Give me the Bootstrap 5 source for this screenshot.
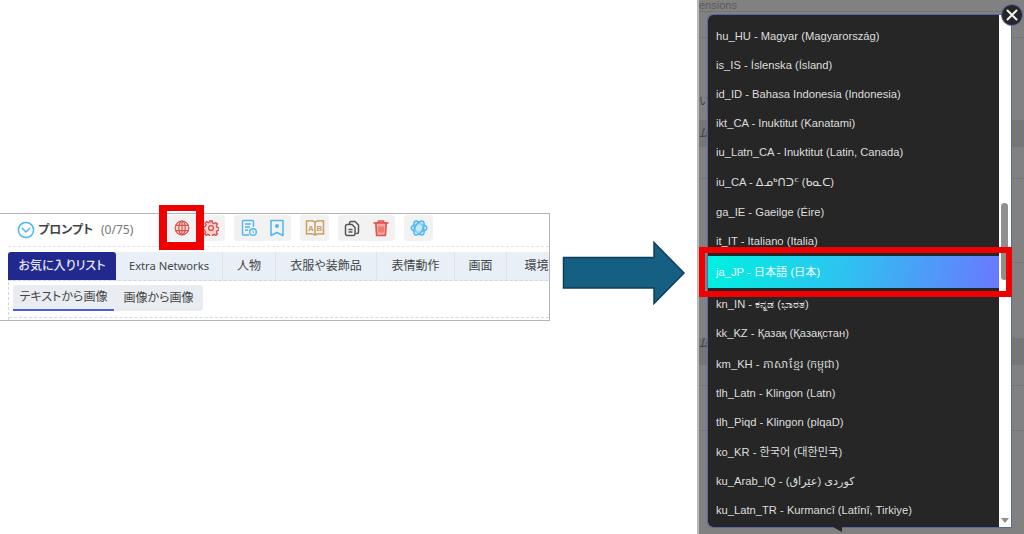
<!DOCTYPE html>
<html lang="ja">
<head>
<meta charset="utf-8">
<title>Language setting</title>
<link href="https://cdn.jsdelivr.net/npm/bootstrap@5.3.0/dist/css/bootstrap.min.css" rel="stylesheet">
<script src="https://cdn.jsdelivr.net/npm/bootstrap@5.3.0/dist/js/bootstrap.bundle.min.js"></script>
<style>
html,body{margin:0;height:534px;overflow:hidden;background:#fff}
body{position:relative;width:1024px;font-family:"Noto Sans","Noto Sans CJK JP",sans-serif}
.ui-panel{position:absolute;left:-1px;top:213px;width:551px;height:108px;border:1px solid #b4b4b4;border-left:0;overflow:hidden;background:#fff}
.ui-head{height:33px;margin-left:9px;padding-left:9px;border-bottom:1px dashed #e2e6ea}
.ui-title{font-size:12px;font-weight:700;color:#444;margin-left:3px;width:63px;white-space:nowrap;font-feature-settings:"palt"}
.ui-count{font-size:12px;color:#777;width:67px;white-space:nowrap}
.ui-tools{gap:9px;padding-top:1px;align-self:flex-start}
.ui-tool{height:26px;background:#f2f2f2;border-radius:4px;width:57px;display:flex;align-items:center;justify-content:space-around}
.ui-tool.one{width:29px}
.ui-lower{margin-left:9px;height:73px;border-left:1px dashed #cfd6dc}
.ui-tabs{margin-top:5px;margin-left:-1px;height:29px;background:#e8eff6;width:600px;flex-wrap:nowrap;border-bottom:1px dashed #cfd6dc}
.ui-tab{font-size:12px;color:#444;display:flex;align-items:center;justify-content:center;border-right:1px solid #dde3e8;flex:none;height:28px;font-feature-settings:"palt"}
.ui-tab.lat{font-size:11.2px}
.ui-tab.on{background:#21298f;color:#e8e8f6;border-radius:3px 3px 0 0;font-weight:500;border-right:0}
.w-a{width:108px}.w-b{width:107px}.w-c{width:53px}.w-d{width:101px}.w-e{width:78px}.w-f{width:52px}.w-g{width:60px}
.ui-subs{margin:4px 0 0 4px;height:26px;width:190px;background:#e9edf2;border-radius:3px}
.ui-sub{font-size:12px;color:#444;display:flex;align-items:center;justify-content:center;height:26px;font-feature-settings:"palt"}
.ui-sub.on{width:101px;border-bottom:2px solid #4a5be0}
.ui-sub.off{width:89px}
.ui-foot{margin-top:6px;border-top:1px dashed #d4dae0}
.ui-arrow{position:absolute;left:562px;top:241px}
.ui-modal{position:absolute;left:697px;top:0;width:327px;height:534px;overflow:hidden;background-color:#818181;border-left:2px solid #b9b9b9;
  background-repeat:no-repeat;
  background-image:linear-gradient(#757575,#757575),linear-gradient(#757575,#757575),linear-gradient(#767676,#767676),linear-gradient(#757575,#757575),linear-gradient(#757575,#757575),linear-gradient(#767676,#767676),linear-gradient(#757575,#757575),linear-gradient(#757575,#757575);
  background-size:100% 1px,100% 1px,100% 27px,100% 1px,100% 1px,100% 27px,100% 1px,100% 1px;
  background-position:0 11px,0 37px,0 120px,0 178px,0 262px,0 338px,0 385px,0 430px}
.ui-ghost{font-family:"Liberation Sans",sans-serif;font-size:11px;color:#5a5a5a;line-height:1;height:11px;white-space:nowrap}
.ui-ghost-mark{position:absolute;left:0;font-size:11px;line-height:1;color:#3f3f3f}
.g1{top:95px}.g2{top:127px}.g3{top:337px}
.ui-box{position:absolute;left:9px;top:15px;width:303px;height:512px;background:#fff;border-radius:5px 0 0 5px;box-shadow:0 0 0 1px #5a66a8}
.ui-langs{width:291px;height:512px;background:#262626;border-radius:5px 0 0 5px;padding-top:7px;font-family:"Liberation Sans","DejaVu Sans","Noto Sans CJK JP","Noto Sans CJK KR",sans-serif;font-size:11.2px;color:#dedede;overflow:hidden}
.ui-lang{height:29px;padding-left:8px;display:flex;align-items:center;background:transparent;border:0;color:inherit;white-space:nowrap;line-height:1;flex:none}
.h-31{height:31px}
.ui-lang.kn{height:31px;padding-top:3px}
.ui-lang.km{height:31px;padding-top:2px}
.ui-lang.ko{height:30px;padding-top:2px}
.ui-lang.on{height:32px;padding-top:2px;background:linear-gradient(100deg,#00f0e0 0%,#2cc5f0 45%,#6a78ff 100%);color:#f0ffff}
.ui-thumb{position:absolute;left:293px;top:188px;width:7px;height:77px;background:#8f8f8f;border-radius:4px}
.ui-down{position:absolute;left:293px;top:503px;width:0;height:0;border-left:4px solid transparent;border-right:4px solid transparent;border-top:5px solid #8f8f8f}
.ui-close{position:absolute;left:302px;top:4px;width:22px;height:22px;border-radius:50%;background:#262626;border:1px solid #5a66a8;padding:0;display:flex;align-items:center;justify-content:center}
.ui-notch{position:absolute;left:134px;top:522px;width:0;height:0;border-top:5px solid transparent;border-bottom:5px solid transparent;border-right:9px solid #262626}
.ui-mark{position:absolute;border-style:solid;border-color:#f00000;background:transparent;pointer-events:none}
.ui-mark-a{left:159px;top:205px;width:45px;height:45px;border-width:6px 8px 8px 8px}
.ui-mark-b{left:699px;top:247px;width:313px;height:50px;border-width:6px}
</style>
</head>
<body>

<div class="ui-panel">
  <div class="ui-head d-flex align-items-center">
    <svg width="18" height="18" viewBox="0 0 18 18" fill="none" stroke="#4db8f0" stroke-width="1.5"><circle cx="9" cy="9" r="7.6"/><path d="M5.2 7.2 9 11l3.8-3.8" stroke-linecap="round" stroke-linejoin="round"/></svg>
    <span class="ui-title">プロンプト</span>
    <span class="ui-count">(0/75)</span>
    <div class="ui-tools d-flex">
      <div class="ui-tool">
        <svg width="16" height="16" viewBox="0 0 16 16" fill="#f5d5d2" stroke="#d9534f" stroke-width="1.2"><circle cx="8" cy="8" r="6.8"/><ellipse cx="8" cy="8" rx="3.2" ry="6.8"/><path d="M1.6 5.4h12.8M1.6 10.6h12.8M8 1.2v13.6"/></svg>
        <svg width="16" height="16" viewBox="0 0 16 16" fill="#f5d5d2" stroke="#d9534f" stroke-width="1.4"><path d="M6.8 1h2.4l.4 1.9 1.5.7 1.7-1 1.6 1.6-1 1.7.7 1.5 1.9.4v2.4l-1.9.4-.7 1.5 1 1.7-1.6 1.6-1.7-1-1.5.7-.4 1.9H6.8l-.4-1.9-1.5-.7-1.7 1-1.600-1.6 1-1.7-.7-1.5L.5 9.2V6.8l1.9-.4.7-1.5-1-1.7 1.6-1.6 1.7 1 1.5-.7z"/><circle cx="8" cy="8" r="2.4"/></svg>
      </div>
      <div class="ui-tool">
        <svg width="18" height="18" viewBox="0 0 18 18" fill="none" stroke="#4db8f0" stroke-width="1.4"><path d="M9 16H3.500a1 1 0 0 1-1-1V2.500a1 1 0 0 1 1-1h9a1 1 0 0 1 1 1V8"/><path d="M5 5h6M5 8h5M5 11h3"/><circle cx="13" cy="13" r="3.3"/><path d="M13 11.500V13l1 .8" stroke-width="1"/></svg>
        <svg width="16" height="18" viewBox="0 0 16 18" fill="none" stroke="#4db8f0" stroke-width="1.5"><path d="M2 1.500h12v15l-6-3-6 3z" stroke-linejoin="round"/><circle cx="8" cy="7" r="2" fill="#4db8f0" stroke="none"/></svg>
      </div>
      <div class="ui-tool one">
        <svg width="20" height="18" viewBox="0 0 20 18"><path d="M10 3C8 1.800 4.500 1.500 1.500 2v13c3-.5 6.500-.2 8.500 1 2-1.200 5.500-1.500 8.500-1V2c-3-.5-6.500-.2-8.500 1zM10 3v13" fill="none" stroke="#c9a063" stroke-width="1.5"/><text x="3" y="12" font-size="8" font-weight="700" fill="#c9a063" font-family="Liberation Sans">A</text><text x="11.500" y="12" font-size="8" font-weight="700" fill="#c9a063" font-family="Liberation Sans">B</text></svg>
      </div>
      <div class="ui-tool">
        <svg width="16" height="17" viewBox="0 0 16 17" fill="none" stroke="#555" stroke-width="1.5"><path d="M5.500 4.500V3a1.500 1.500 0 0 1 1.500-1.500h4l3.500 3.500v7a1.500 1.500 0 0 1-1.500 1.500H12"/><path d="M3 4.500h5l3 3v6.500A1.500 1.500 0 0 1 9.500 15.500H3A1.500 1.500 0 0 1 1.500 14V6A1.500 1.500 0 0 1 3 4.500z"/><path d="M4.500 9.500h4M4.500 12h4"/></svg>
        <svg width="16" height="18" viewBox="0 0 16 18" fill="none" stroke="#e0534a" stroke-width="1.6"><path d="M1 4h14M5.500 4V2h5v2" stroke-linecap="round"/><path d="M2.800 4h10.400l-.8 12.500H3.600z" fill="#f2a8a2"/><path d="M6 7.500v6M8 7.500v6M10 7.500v6" stroke-width="1"/></svg>
      </div>
      <div class="ui-tool one">
        <svg width="18" height="18" viewBox="0 0 18 18" fill="#bfe6fa" fill-opacity=".5" stroke="#4db8f0" stroke-width="1.5"><ellipse cx="9" cy="9" rx="7.8" ry="4"/><ellipse cx="9" cy="9" rx="7.8" ry="4" transform="rotate(60 9 9)"/><ellipse cx="9" cy="9" rx="7.8" ry="4" transform="rotate(120 9 9)"/></svg>
      </div>
    </div>
  </div>
  <div class="ui-lower">
    <div class="ui-tabs d-flex">
      <div class="ui-tab on w-a">お気に入りリスト</div>
      <div class="ui-tab lat w-b">Extra Networks</div>
      <div class="ui-tab w-c">人物</div>
      <div class="ui-tab w-d">衣服や装飾品</div>
      <div class="ui-tab w-e">表情動作</div>
      <div class="ui-tab w-f">画面</div>
      <div class="ui-tab w-g">環境</div>
    </div>
    <div class="ui-subs d-flex">
      <div class="ui-sub on">テキストから画像</div>
      <div class="ui-sub off">画像から画像</div>
    </div>
    <div class="ui-foot"></div>
  </div>
</div>

<svg class="ui-arrow" width="124" height="64" viewBox="0 0 124 64"><path d="M1.500 16.500H92V1.500L122 32 92 62.500V47H1.500z" fill="#155f82" stroke="#0f3f57" stroke-width="1.5"/></svg>

<div class="ui-modal">
  <div class="ui-ghost">ensions</div>
  <span class="ui-ghost-mark g1">い</span>
  <span class="ui-ghost-mark g2">ム</span>
  <span class="ui-ghost-mark g3">ム</span>
  <div class="ui-box">
    <div class="ui-langs list-group">
      <div class="ui-lang">hu_HU - Magyar (Magyarország)</div>
      <div class="ui-lang">is_IS - Íslenska (Ísland)</div>
      <div class="ui-lang">id_ID - Bahasa Indonesia (Indonesia)</div>
      <div class="ui-lang">ikt_CA - Inuktitut (Kanatami)</div>
      <div class="ui-lang">iu_Latn_CA - Inuktitut (Latin, Canada)</div>
      <div class="ui-lang h-31">iu_CA - ᐃᓄᒃᑎᑐᑦ (ᑲᓇᑕ)</div>
      <div class="ui-lang">ga_IE - Gaeilge (Éire)</div>
      <div class="ui-lang">it_IT - Italiano (Italia)</div>
      <div class="ui-lang on">ja_JP - 日本語 (日本)</div>
      <div class="ui-lang kn">kn_IN - ಕನ್ನಡ (ಭಾರತ)</div>
      <div class="ui-lang">kk_KZ - Қазақ (Қазақстан)</div>
      <div class="ui-lang km">km_KH - ភាសាខ្មែរ (កម្ពុជា)</div>
      <div class="ui-lang">tlh_Latn - Klingon (Latn)</div>
      <div class="ui-lang">tlh_Piqd - Klingon (plqaD)</div>
      <div class="ui-lang ko">ko_KR - 한국어 (대한민국)</div>
      <div class="ui-lang">ku_Arab_IQ - (عێراق) کوردی</div>
      <div class="ui-lang">ku_Latn_TR - Kurmancî (Latînî, Tirkiye)</div>
    </div>
    <div class="ui-thumb"></div>
    <div class="ui-down"></div>
  </div>
  <div class="ui-notch"></div>
  <button class="ui-close" type="button" aria-label="Close">
    <svg width="12" height="12" viewBox="0 0 12 12" stroke="#f2f2f2" stroke-width="2" stroke-linecap="round"><path d="M1.500 1.500l9 9M10.500 1.500l-9 9"/></svg>
  </button>
</div>

<div class="ui-mark ui-mark-a"></div>
<div class="ui-mark ui-mark-b"></div>
</body>
</html>
